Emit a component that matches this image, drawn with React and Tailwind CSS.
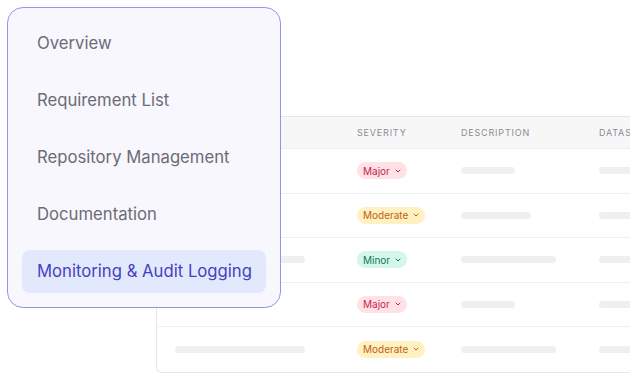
import { ChevronDown } from 'lucide-react'

const menu = [
  'Overview',
  'Requirement List',
  'Repository Management',
  'Documentation',
  'Monitoring & Audit Logging',
]

const badgeStyles = {
  Major: 'bg-[#ffe2e6] text-[#c81e4b]',
  Moderate: 'bg-[#fff1c2] text-[#c2620c]',
  Minor: 'bg-[#d4f7e9] text-[#0d7a5a]',
}

const rows = [
  { first: 0, sev: 'Major', desc: 54 },
  { first: 0, sev: 'Moderate', desc: 70 },
  { first: 130, sev: 'Minor', desc: 95 },
  { first: 0, sev: 'Major', desc: 54 },
  { first: 130, sev: 'Moderate', desc: 95 },
]

const Bar = ({ width }) => (
  <div className="h-[7px] rounded-full bg-[#efeff1]" style={{ width }} />
)

const App = () => {
  return (
    <div className="relative w-[630px] h-[375px] overflow-hidden bg-white font-['Inter',sans-serif]">
      {/* Tabla */}
      <div className="ml-[156px] mt-[116px] w-[560px] border border-[#e6e6e9] rounded-bl-[6px] border-r-0">
        <div className="grid grid-cols-[183px_104px_138px_1fr] h-[32px] items-center bg-[#f7f7f8] border-b border-[#ececee] text-[9px] tracking-[0.09em] text-[#8c8c92] pt-px">
          <div className="pl-[17px]"></div>
          <div className="pl-[17px]">SEVERITY</div>
          <div className="pl-[17px]">DESCRIPTION</div>
          <div className="pl-[17px]">DATASETS</div>
        </div>
        {rows.map((r, i) => (
          <div
            key={i}
            className={`grid grid-cols-[183px_104px_138px_1fr] h-[44.5px] items-center ${
              i < rows.length - 1 ? 'border-b border-[#f0f0f2]' : ''
            }`}
          >
            <div className="pl-[18px]">{r.first > 0 && <Bar width={r.first} />}</div>
            <div className="pl-[17px] flex items-center">
              <span
                className={`flex items-center gap-[4px] h-[17px] pl-[6px] pr-[5px] rounded-full text-[10px] leading-none ${badgeStyles[r.sev]}`}
              >
                {r.sev}
                <ChevronDown size={8} strokeWidth={3} />
              </span>
            </div>
            <div className="pl-[17px]">
              <Bar width={r.desc} />
            </div>
            <div className="pl-[17px]">
              <Bar width={60} />
            </div>
          </div>
        ))}
      </div>

      {/* Menú */}
      <div className="absolute left-[7px] top-[7px] w-[274px] h-[301px] rounded-[16px] border border-[#8e96ee] bg-[#f7f7fd] pt-[14px] px-[14px] flex flex-col gap-[14px]">
        {menu.map((item, i) => {
          const active = i === menu.length - 1
          return (
            <div
              key={item}
              className={`h-[43px] flex items-center pl-[15px] pt-px rounded-[8px] text-[16.7px] ${
                active ? 'bg-[#e3e9fc] text-[#4340c4]' : 'text-[#6b6b76]'
              }`}
            >
              {item}
            </div>
          )
        })}
      </div>
    </div>
  )
}

export default App
